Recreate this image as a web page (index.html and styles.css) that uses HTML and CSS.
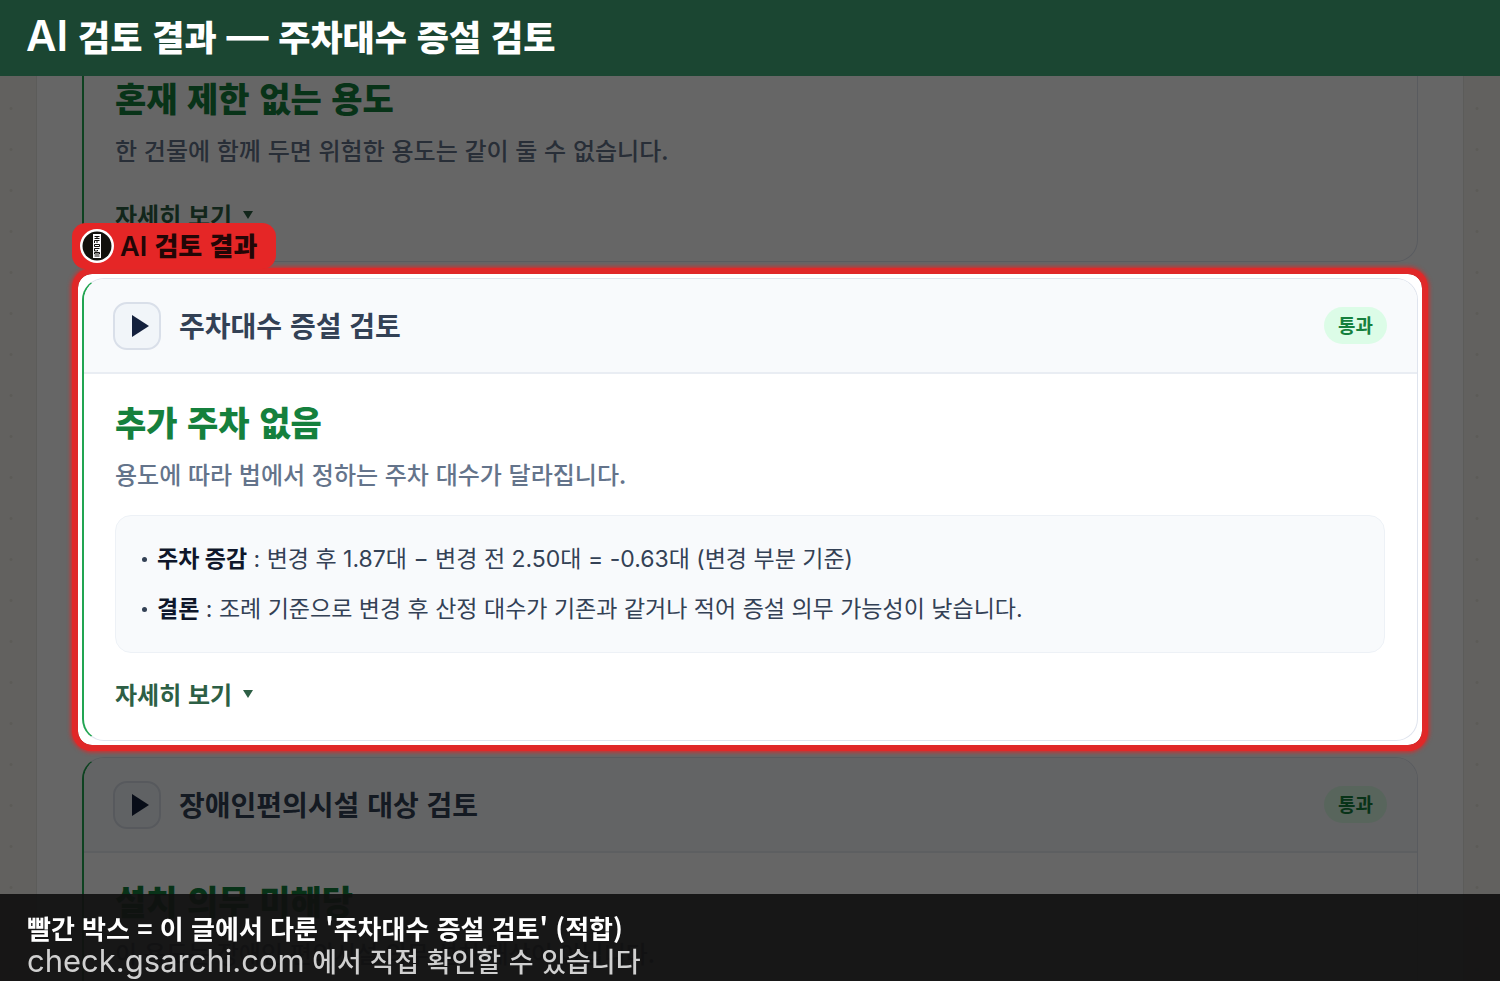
FILE: index.html
```
<!DOCTYPE html>
<html lang="ko">
<head>
    <meta charset="UTF-8">
    <meta name="viewport" content="width=device-width, initial-scale=1">
    <title>AI 검토 결과 — 주차대수 증설 검토</title>
    <link rel="stylesheet" href="styles.css">
</head>
<body>
<header class="banner">
    <h1><span class="latin">AI</span> 검토 결과 <span class="latin">—</span> 주차대수 증설 검토</h1>
</header>

<main class="panel">
    <section class="card">
        <div class="card-body">
            <h3>혼재 제한 없는 용도</h3>
            <p class="desc">한 건물에 함께 두면 위험한 용도는 같이 둘 수 없습니다.</p>
            <button type="button" class="more more-gap">자세히 보기 <svg width="10" height="8" viewBox="0 0 10 8"><path d="M0 0h10L5 8z"/></svg></button>
        </div>
    </section>

    <div class="spotlight">
        <section class="card">
            <div class="card-head">
                <button type="button" class="toggle" aria-label="펼치기"><svg width="18" height="22" viewBox="0 0 18 22"><path d="M1 0l17 11L1 22z"/></svg></button>
                <h2>주차대수 증설 검토</h2>
                <span class="badge">통과</span>
            </div>
            <div class="card-body">
                <h3>추가 주차 없음</h3>
                <p class="desc">용도에 따라 법에서 정하는 주차 대수가 달라집니다.</p>
                <ul class="facts">
                    <li><b>주차 증감</b> : 변경 후 1.87대 − 변경 전 2.50대 = -0.63대 (변경 부분 기준)</li>
                    <li><b>결론</b> : 조례 기준으로 변경 후 산정 대수가 기존과 같거나 적어 증설 의무 가능성이 낮습니다.</li>
                </ul>
                <button type="button" class="more">자세히 보기 <svg width="10" height="8" viewBox="0 0 10 8"><path d="M0 0h10L5 8z"/></svg></button>
            </div>
        </section>
        <div class="frame"></div>
        <div class="tag">
            <svg class="logo" width="34" height="34" viewBox="0 0 34 34">
                <circle cx="17" cy="17" r="17" fill="#fff"/>
                <circle cx="17" cy="17" r="14.5" fill="#12110c"/>
                <path d="M13 5h8v24h-8z" fill="#fff"/>
                <path d="M14.500 7.500h5M17 7.500v2M14.500 9.500h5M14.500 14v-2.500h5M17 11.500v2.500M14.500 15.500h5v2h-5zM19.500 19.500h-5v2.500h3v-1M14.500 23.500h5v1.500h-5zM14.500 27h5" fill="none" stroke="#12110c"/>
            </svg>
            <span><span class="latin">AI</span> 검토 결과</span>
        </div>
    </div>

    <section class="card">
        <div class="card-head">
            <button type="button" class="toggle" aria-label="펼치기"><svg width="18" height="22" viewBox="0 0 18 22"><path d="M1 0l17 11L1 22z"/></svg></button>
            <h2>장애인편의시설 대상 검토</h2>
            <span class="badge">통과</span>
        </div>
        <div class="card-body">
            <h3>설치 의무 미해당</h3>
            <p class="desc">이 용도는 장애인 편의시설 의무 설치 대상이 아닙니다.</p>
        </div>
    </section>
</main>

<footer class="caption">
    <p>빨간 박스 = 이 글에서 다룬 '주차대수 증설 검토' (적합)</p>
    <p class="source"><span class="latin">check.gsarchi.com</span> 에서 직접 확인할 수 있습니다</p>
</footer>
</body>
</html>
```
FILE: styles.css
```
* {
    margin: 0;
    padding: 0;
    box-sizing: border-box;
}
body {
    height: 100vh;
    overflow: hidden;
    font-family: "Noto Sans CJK KR", sans-serif;
    color: #334155;
    background-color: #f5f3ee;
    background-image: radial-gradient(circle, #e6e3db 1px, transparent 2px), radial-gradient(circle, #e6e3db 1px, transparent 2px);
    background-size: 22px 41px;
    background-repeat: repeat-y;
    background-position: left 0 top 6px, right 12px top 6px;
}
button {
    font: inherit;
    border: 0;
    background: none;
    cursor: pointer;
}

/* top banner */
.banner {
    position: fixed;
    top: 0;
    left: 0;
    right: 0;
    z-index: 3;
    height: 76px;
    padding: 0 26px 4px;
    display: flex;
    align-items: center;
    background: #1b4632;
    color: #fff;
}
.banner h1 {
    font-size: 35px;
    line-height: 60px;
    font-weight: 900;
}
.banner .latin {
    font-size: 42px;
    font-weight: 600;
}
.latin {
    font-family: Inter, sans-serif;
}

/* cards */
.panel {
    margin: 0 36px;
    padding: 49px 45px 0;
    display: flex;
    flex-direction: column;
    gap: 16px;
    background: #fff;
    border: solid #e7e5e0;
    border-width: 0 1px;
}
.card {
    border: 1px solid #dfe4ee;
    border-left: 2px solid #22a552;
    border-radius: 22px;
    background: #fff;
    overflow: hidden;
}
.card-head {
    display: flex;
    align-items: center;
    gap: 18px;
    height: 95px;
    padding: 0 30px 0 29px;
    background: #f8fafc;
    border-bottom: 2px solid #e9edf3;
}
.card-head h2 {
    flex: 1;
    padding-bottom: 2px;
    font-size: 28px;
    line-height: 40px;
    font-weight: 700;
}
.toggle {
    display: flex;
    align-items: center;
    justify-content: center;
    width: 48px;
    height: 48px;
    padding-left: 6px;
    border: 2px solid #d9dfe9;
    border-radius: 14px;
    background: #f1f5f9;
    fill: #14213d;
}
.badge {
    padding: 0 14px 2px;
    border-radius: 20px;
    background: #dcfce7;
    color: #15803d;
    font-size: 19px;
    line-height: 35px;
    font-weight: 700;
}
.card-body {
    padding: 22px 32px 29px 31px;
}
.card-body h3 {
    font-size: 34px;
    line-height: 52px;
    font-weight: 800;
    color: #15803d;
}
.desc {
    margin-top: 8px;
    font-size: 24px;
    line-height: 36px;
    font-weight: 500;
    color: #64748b;
}
.facts {
    margin-top: 23px;
    padding: 18px 26px;
    list-style: none;
    font-family: Inter, "Noto Sans CJK KR", sans-serif;
    font-size: 23px;
    line-height: 50px;
    background: #f8fafc;
    border: 1px solid #edf1f6;
    border-radius: 16px;
}
.facts li {
    display: flex;
    white-space: pre-wrap;
}
.facts li::before {
    content: "";
    flex: none;
    align-self: center;
    width: 5px;
    height: 5px;
    margin-right: 10px;
    border-radius: 50%;
    background: #334155;
}
.facts b {
    color: #0f172a;
}
.more {
    display: flex;
    align-items: center;
    gap: 11px;
    margin-top: 24px;
    font-size: 24px;
    line-height: 34px;
    font-weight: 600;
    color: #2d5f45;
    fill: #2d5f45;
}
.more-gap {
    margin-top: 30px;
}

/* highlighted card, everything else is dimmed */
.spotlight {
    position: relative;
    z-index: 1;
}
.frame {
    position: absolute;
    inset: -4px;
    border-radius: 14px;
    box-shadow: 0 0 0 6px #e02828, 0 0 4px 7px #e02828, 0 0 0 3000px rgba(0, 0, 0, .6);
    pointer-events: none;
}
.tag {
    position: absolute;
    left: -10px;
    top: -55px;
    display: flex;
    align-items: center;
    gap: 6px;
    height: 46px;
    padding: 0 19px 0 8px;
    border-radius: 14px;
    background: #e52626;
    color: #230606;
    font-size: 26px;
    line-height: 46px;
    font-weight: 900;
}
.tag .latin {
    font-size: 27px;
    font-weight: 600;
}

/* bottom caption */
.caption {
    position: fixed;
    left: 0;
    right: 0;
    bottom: 0;
    z-index: 3;
    height: 87px;
    padding: 17px 27px 0;
    background: rgba(16, 16, 16, .92);
    color: #fff;
    font-size: 26px;
    line-height: 33px;
    font-weight: 700;
}
.caption .source {
    color: #d0d0d0;
    font-size: 27px;
    font-weight: 500;
}
.source .latin {
    font-size: 31px;
    font-weight: 400;
}
```
